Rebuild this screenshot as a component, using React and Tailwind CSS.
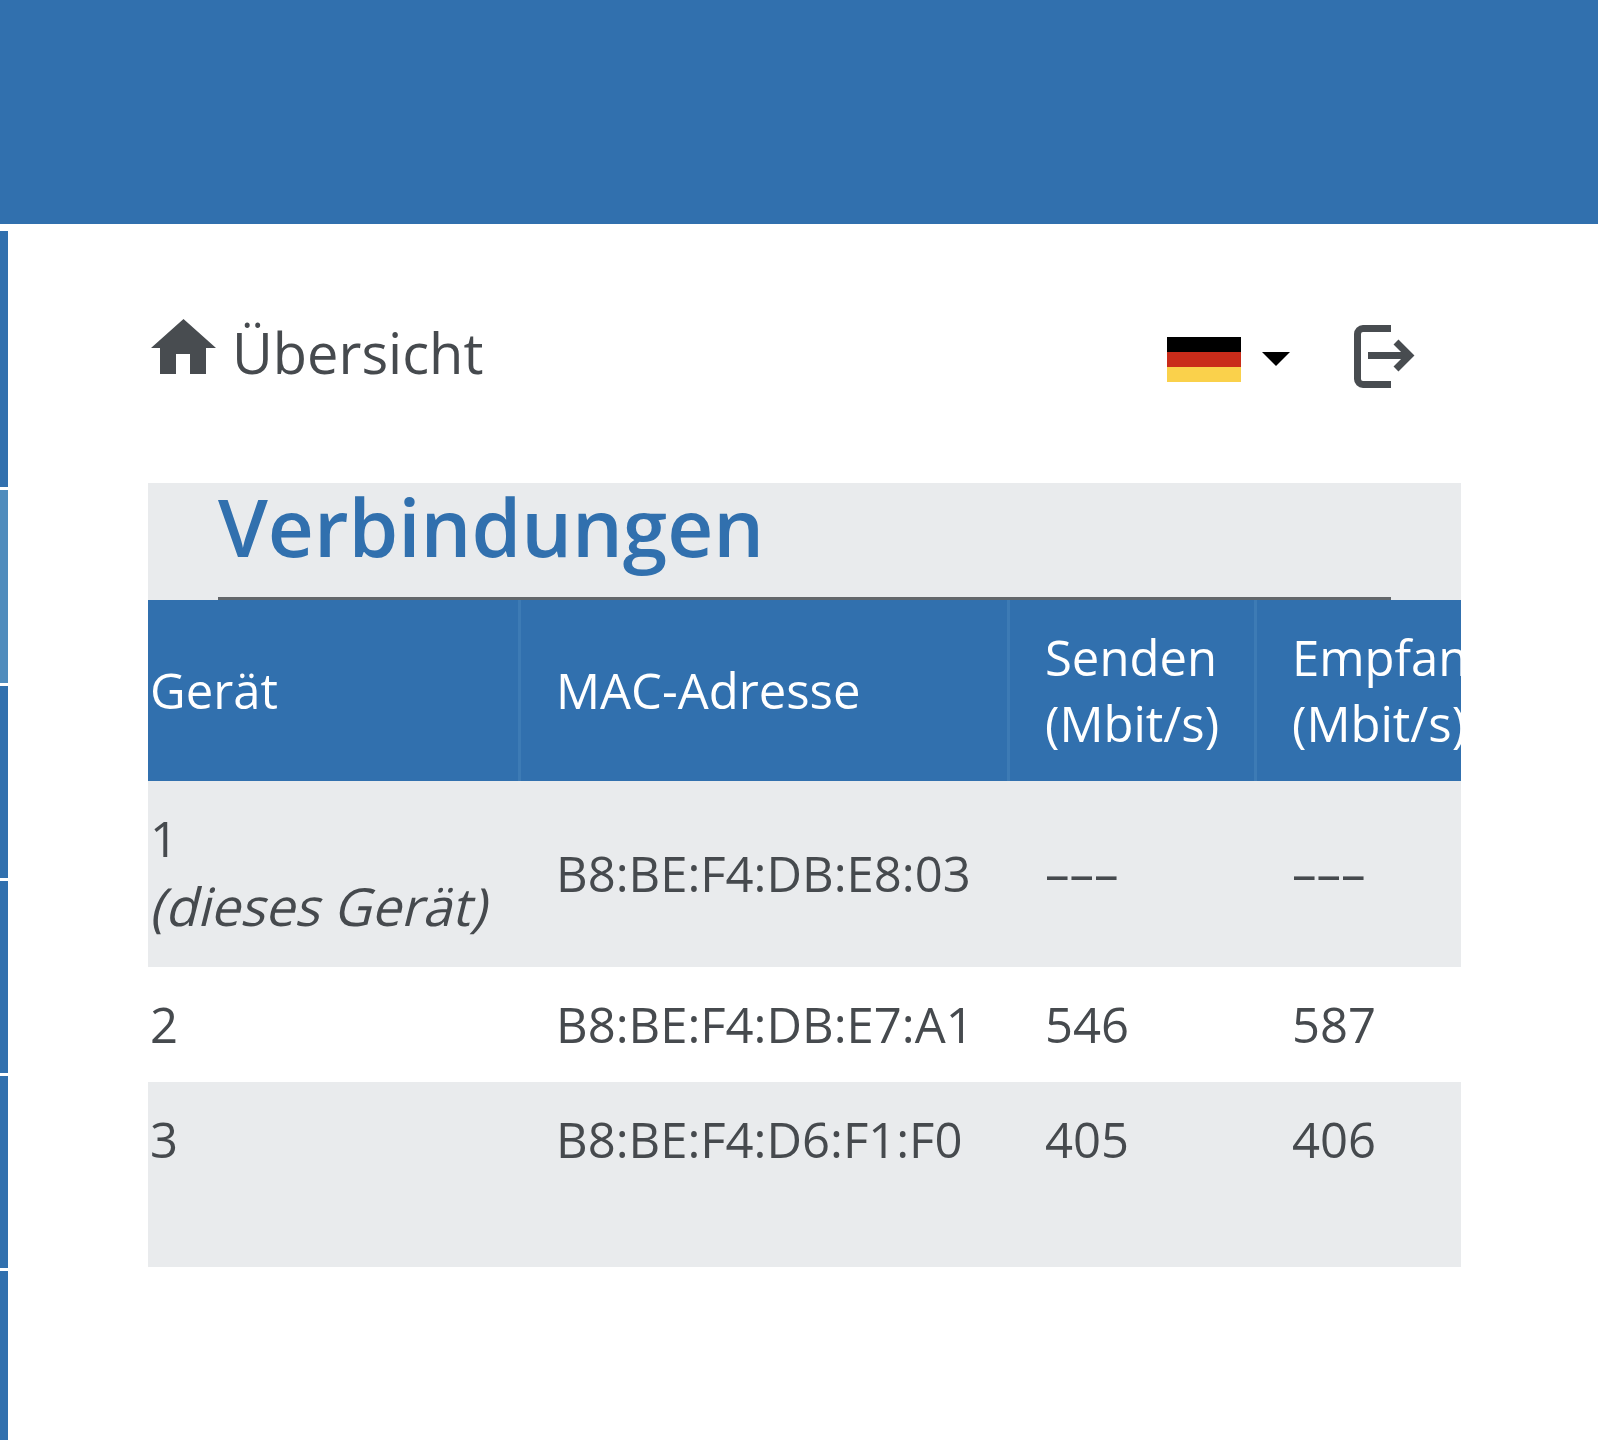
const rows = [
  { id: '2', mac: 'B8:BE:F4:DB:E7:A1', send: '546', recv: '587', className: 'h-[115px] items-center pb-[2px]' },
  { id: '3', mac: 'B8:BE:F4:D6:F1:F0', send: '405', recv: '406', className: 'h-[185px] items-start bg-[#e9ebed] pt-[23px]' },
];

const gridCols = 'grid grid-cols-[373px_489px_247px_204px]';

const HomeIcon = () => (
  <svg width="65" height="55" viewBox="0 0 65 55" className="mt-[11px] shrink-0 fill-[#484c50]">
    <path d="M32.5 0L65 29H55V55H39V35H25V55H9V29H0Z" />
  </svg>
);

const LogoutIcon = () => (
  <svg width="61" height="64" viewBox="0 0 61 64" fill="none" className="stroke-[#484c50]" strokeWidth="7">
    <path d="M37 3.5H9a5.5 5.5 0 0 0-5.5 5.5v45a5.5 5.5 0 0 0 5.5 5.5H37" />
    <path d="M14 30.5H54" />
    <path d="M42 17L55.5 30.5L42 44" />
  </svg>
);

const App = () => {
  return (
    <div className="h-[1440px] w-[1598px] overflow-hidden bg-white font-['Open_Sans',sans-serif] text-[#464a4e]">
      <div className="h-[224px] bg-[#3170ae]" />

      <div className="flex">
        <aside className="flex h-[1216px] w-2 shrink-0 flex-col gap-[3px] pt-[7px]">
          <div className="h-[256px] bg-[#3170ae]" />
          <div className="h-[193px] bg-[#4f8cbd]" />
          <div className="h-[192px] bg-[#3170ae]" />
          <div className="h-[192px] bg-[#3170ae]" />
          <div className="h-[192px] bg-[#3170ae]" />
          <div className="flex-1 bg-[#3170ae]" />
        </aside>

        <main className="ml-[140px] w-[1313px]">
          <div className="mt-[84px] mb-[91px] flex h-[84px] items-start pl-[3px] pr-[46px]">
            <HomeIcon />
            <span className="ml-[16px] mt-[16px] text-[56px] font-[380] leading-none">Übersicht</span>

            <div className="ml-auto mt-[29px] flex w-[74px] flex-col">
              <div className="h-[15px] bg-black" />
              <div className="h-[15px] bg-[#c92c1a]" />
              <div className="h-[15px] bg-[#fad14b]" />
            </div>
            <div className="ml-[21px] mt-[44px] h-0 w-0 border-x-[14px] border-t-[14px] border-x-transparent border-t-black" />
            <div className="ml-[64px] mt-[17px]">
              <LogoutIcon />
            </div>
          </div>

          <div className="overflow-hidden">
            <div className="h-[117px] bg-[#e9ebed] px-[70px]">
              <h1 className="h-[117px] border-b-[3px] border-[#63676b] text-[80px] font-semibold leading-[86px] text-[#3170ae]">
                Verbindungen
              </h1>
            </div>

            <div className={`${gridCols} h-[181px] items-center bg-[#3170ae] text-[49px] leading-[66px] text-white`}>
              <div className="flex h-full items-center border-r-[3px] border-[#3d7bb5] pb-[2px] pl-[2px]">Gerät</div>
              <div className="flex h-full items-center border-r-[3px] border-[#3d7bb5] pb-[2px] pl-[35px]">MAC-Adresse</div>
              <div className="flex h-full items-center border-r-[3px] border-[#3d7bb5] pb-[2px] pl-[35px]">
                <span>
                  Senden
                  <br />
                  (Mbit/s)
                </span>
              </div>
              <div className="flex h-full items-center overflow-hidden whitespace-nowrap pb-[2px] pl-[35px]">
                <span>
                  Empfangen
                  <br />
                  (Mbit/s)
                </span>
              </div>
            </div>

            <div className={`${gridCols} h-[186px] items-center bg-[#e9ebed] pb-[2px] text-[49px] leading-[68px]`}>
              <div className="pb-[2px] pl-[2px]">
                1
                <br />
                <span className="ml-[4px] inline-block -skew-x-[14deg] text-[52.6px] font-[380]">(dieses Gerät)</span>
              </div>
              <div className="pl-[35px]">B8:BE:F4:DB:E8:03</div>
              <div className="pl-[35px]">–––</div>
              <div className="pl-[35px]">–––</div>
            </div>

            {rows.map((row) => (
              <div key={row.id} className={`${gridCols} ${row.className} text-[49px] leading-[68px]`}>
                <div className="pl-[2px]">{row.id}</div>
                <div className="pl-[35px]">{row.mac}</div>
                <div className="pl-[35px]">{row.send}</div>
                <div className="pl-[35px]">{row.recv}</div>
              </div>
            ))}
          </div>
        </main>
      </div>
    </div>
  );
};

export default App;
